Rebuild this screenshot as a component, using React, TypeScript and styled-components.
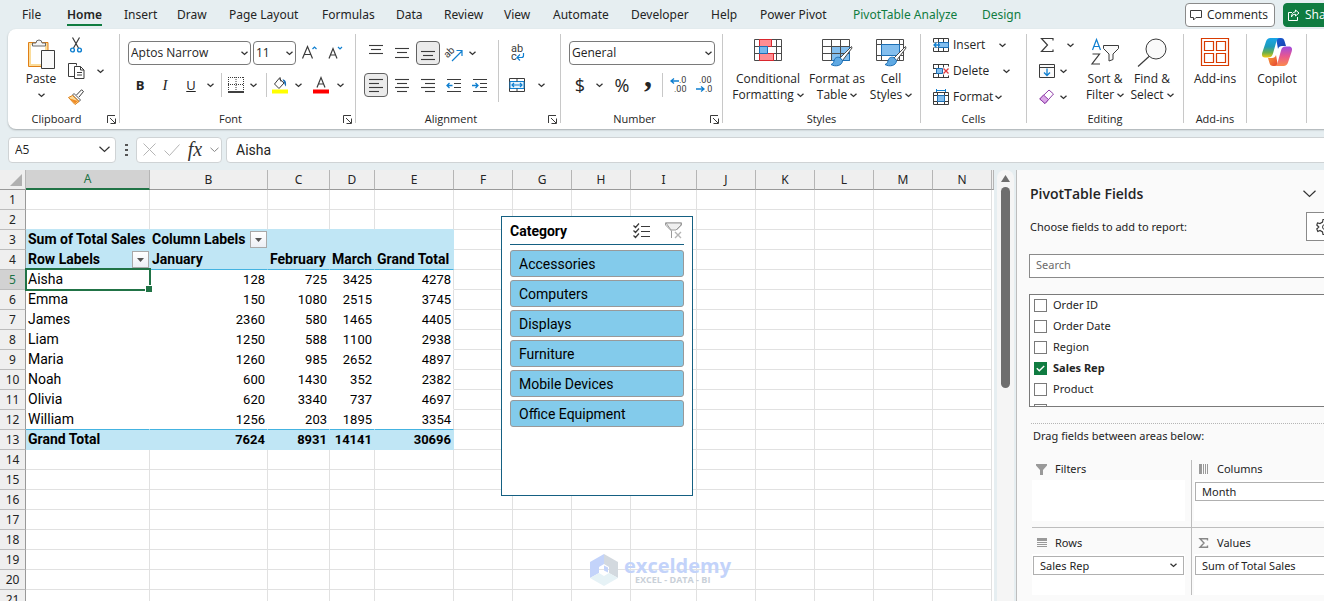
import React from "react";
import styled, { createGlobalStyle, css } from "styled-components";

const UI = `"Open Sans", "Noto Sans", sans-serif`;
const WIDE = `"Noto Sans", "Open Sans", sans-serif`;
const GRID = `Roboto, "Liberation Sans", sans-serif`;

const C = {
  chrome: "#e6eef1",
  ink: "#242424",
  green: "#107c41",
  select: "#217346",
  blue: "#0f7fd0",
  line: "#c8c8c8",
  gridline: "#e1e1e1",
  pivot: "#c0e6f5",
  pivotEdge: "#44b3e1",
  slicer: "#83cbeb",
  slicerEdge: "#156082",
};

const Global = createGlobalStyle`
  * { box-sizing: border-box; }
  html, body { margin: 0; height: 100%; overflow: hidden; background: ${C.chrome}; }
  body { font: 12px/16px ${UI}; color: ${C.ink}; }
  button, input, select { font: inherit; color: inherit; margin: 0; }
  button { background: none; border: 0; padding: 0; }
  svg { display: block; flex: none; overflow: visible; }
`;

/* The window runs a little past the right edge of the viewport. */
const Shell = styled.div`
  width: calc(100vw + 32px);
  height: 100vh;
  display: flex;
  flex-direction: column;
  background: ${C.chrome};
`;

/* ---------- Tab strip ---------- */
const TabStrip = styled.header`
  display: flex;
  align-items: center;
  height: 29px;
  padding-left: 22px;
`;
const Tabs = styled.nav`
  display: flex;
  flex: 1;
  height: 29px;
`;
const Tab = styled.a<{ $w: number; $active?: boolean; $context?: boolean }>`
  flex: 0 0 ${(p) => p.$w}px;
  font-family: ${WIDE};
  font-size: 12px;
  line-height: 30px;
  color: ${(p) => (p.$context ? C.green : C.ink)};
  font-weight: ${(p) => (p.$active ? 600 : 400)};
  text-decoration: none;
  white-space: nowrap;
  span {
    display: inline-block;
    height: 26px;
    border-bottom: ${(p) => (p.$active ? `2px solid ${C.green}` : "0")};
  }
`;
const ActionButton = styled.button<{ $primary?: boolean }>`
  display: flex;
  align-items: center;
  gap: 5px;
  height: 24px;
  width: ${(p) => (p.$primary ? 73 : 90)}px;
  padding: 0 4px;
  margin-right: ${(p) => (p.$primary ? 0 : 8)}px;
  border: 1px solid ${(p) => (p.$primary ? C.green : "#8a8a8a")};
  border-radius: 4px;
  background: ${(p) => (p.$primary ? C.green : "#fff")};
  color: ${(p) => (p.$primary ? "#fff" : C.ink)};
  white-space: nowrap;
`;

/* ---------- Ribbon ---------- */
const Ribbon = styled.section`
  display: flex;
  align-items: flex-start;
  height: 100px;
  margin-left: 8px;
  padding-top: 5px;
  background: #fff;
  border-radius: 8px;
  box-shadow: 0 1px 2px rgba(0, 0, 0, 0.28);
`;
const Group = styled.div<{ $w: number }>`
  flex: 0 0 ${(p) => p.$w}px;
  display: flex;
  flex-direction: column;
  height: 93px;
`;
const GroupBody = styled.div<{ $gap?: number; $pad?: number }>`
  flex: 1;
  display: flex;
  gap: ${(p) => p.$gap ?? 0}px;
  padding: 3px 0 0 ${(p) => p.$pad ?? 8}px;
`;
const GroupLabel = styled.div<{ $launch?: boolean }>`
  position: relative;
  height: 16px;
  padding-right: ${(p) => (p.$launch ? 14 : 0)}px;
  font-size: 11px;
  text-align: center;
`;
const Launcher = styled.button`
  position: absolute;
  right: 3px;
  top: 4px;
`;
const Divider = styled.i<{ $h?: number; $m?: number; $top?: number }>`
  flex: none;
  width: 1px;
  height: ${(p) => p.$h ?? 89}px;
  margin: ${(p) => p.$top ?? 0}px ${(p) => p.$m ?? 0}px 0;
  background: ${C.line};
`;
const Stack = styled.div<{ $gap?: number; $pad?: number }>`
  display: flex;
  flex-direction: column;
  gap: ${(p) => p.$gap ?? 8}px;
  padding-top: ${(p) => p.$pad ?? 4}px;
`;
const Line = styled.div<{ $gap?: number; $top?: boolean }>`
  display: flex;
  align-items: ${(p) => (p.$top ? "flex-start" : "center")};
  gap: ${(p) => p.$gap ?? 0}px;
`;
const Tool = styled.button<{ $w?: number; $h?: number; $on?: boolean }>`
  display: flex;
  flex: none;
  align-items: center;
  justify-content: center;
  width: ${(p) => p.$w ?? 24}px;
  height: ${(p) => p.$h ?? 24}px;
  ${(p) =>
    p.$on &&
    css`
      background: #ebebeb;
      border: 1px solid #616161;
      border-radius: 4px;
    `}
`;
const BigTool = styled.button<{ $w: number }>`
  display: flex;
  flex-direction: column;
  align-items: center;
  width: ${(p) => p.$w}px;
  white-space: nowrap;
`;
const BigIcon = styled.span`
  display: flex;
  align-items: flex-start;
  justify-content: center;
  height: 34px;
  padding-top: 1px;
`;
const Caption = styled.span`
  display: flex;
  align-items: center;
  gap: 3px;
  height: 16px;
`;
const RowTool = styled.button<{ $gap: number }>`
  display: flex;
  align-items: center;
  height: 16px;
  gap: 4px;
  svg:last-child {
    margin-left: ${(p) => p.$gap}px;
  }
`;
const Picker = styled.span<{ $w: number }>`
  position: relative;
  display: block;
  width: ${(p) => p.$w}px;
  select {
    appearance: none;
    display: block;
    width: 100%;
    height: 24px;
    padding: 0 2px;
    background: #fff;
    border: 1px solid #7a7a7a;
    border-radius: 4px;
  }
  svg {
    position: absolute;
    right: 3px;
    top: 10px;
    pointer-events: none;
  }
`;

/* ---------- Formula bar ---------- */
const FormulaBar = styled.div`
  display: flex;
  align-items: center;
  height: 41px;
  padding-left: 8px;
`;
const Field = styled.div<{ $w?: number }>`
  display: flex;
  align-items: center;
  ${(p) => (p.$w ? `width: ${p.$w}px;` : "flex: 1;")}
  height: 26px;
  background: #fff;
  border: 1px solid #cfd3d5;
  border-radius: 4px;
  input {
    flex: 1;
    min-width: 0;
    border: 0;
    padding: 0;
    background: none;
    outline: 0;
  }
`;
const NameBox = styled(Field)`
  padding: 0 5px 0 6px;
`;
const FormulaTools = styled(Field)`
  justify-content: space-between;
  padding: 0 2px 0 6px;
`;
const FormulaInput = styled(Field)`
  margin-left: 4px;
  padding-left: 9px;
  font: 14px/20px ${GRID};
`;
const Grip = styled.span`
  display: flex;
  justify-content: center;
  width: 20px;
`;

/* ---------- Workspace ---------- */
const Workspace = styled.main`
  flex: 1;
  min-height: 0;
  display: flex;
`;
const Sheet = styled.div`
  position: relative;
  flex: 1;
  min-width: 0;
  overflow: hidden;
  background: #fff;
`;
const Grid = styled.table`
  width: 100%;
  table-layout: fixed;
  border-collapse: separate;
  border-spacing: 0;
  font: 13px/19px ${GRID};
  color: #000;
  th, td {
    height: 20px;
    padding: 0;
    font-weight: 400;
    white-space: nowrap;
  }
`;
const ColHead = styled.th<{ $on?: boolean }>`
  background: ${(p) => (p.$on ? "#d2d2d2" : "#efefef")};
  color: ${(p) => (p.$on ? C.select : C.ink)};
  font-family: ${WIDE};
  font-size: 12px;
  line-height: 18px;
  border-right: 1px solid #b5b5b5;
  border-bottom: ${(p) => (p.$on ? `2px solid ${C.select}` : "1px solid #999")};
`;
const RowHead = styled.th<{ $on?: boolean }>`
  && { padding-top: 1px; }
  background: ${(p) => (p.$on ? "#d2d2d2" : "#efefef")};
  color: ${(p) => (p.$on ? C.select : C.ink)};
  font-family: ${WIDE};
  font-size: 12px;
  line-height: 18px;
  border-right: 1px solid #999;
  border-bottom: 1px solid #bcbcbc;
`;
const Corner = styled.th`
  background: #efefef;
  border-right: 1px solid #b5b5b5;
  border-bottom: 1px solid #999;
  svg { margin-left: 10px; }
`;
const Cell = styled.td<{ $fill?: string; $right?: string; $bottom?: string; $bold?: boolean; $num?: boolean }>`
  position: relative;
  background: ${(p) => p.$fill ?? "#fff"};
  border-right: 1px solid ${(p) => p.$right ?? C.gridline};
  border-bottom: 1px solid ${(p) => p.$bottom ?? C.gridline};
  font-size: ${(p) => (p.$num ? 13 : 14)}px;
  text-align: ${(p) => (p.$num ? "right" : "left")};
  && {
    font-weight: ${(p) => (p.$bold ? 700 : 400)};
    padding: 0 ${(p) => (p.$num ? 2 : 0)}px 0 ${(p) => (p.$num ? 0 : 2)}px;
  }
`;
const FilterButton = styled.button`
  position: absolute;
  right: 0;
  top: 1px;
  display: flex;
  align-items: center;
  justify-content: center;
  width: 17px;
  height: 17px;
  border: 1px solid #a9a9a9;
  background: linear-gradient(#fff, #eceff5);
`;
const Selection = styled.i`
  position: absolute;
  z-index: 1;
  inset: -2px -2px -2px -1px;
  border: 2px solid ${C.select};
  &::after {
    content: "";
    position: absolute;
    right: -3px;
    bottom: -3px;
    width: 6px;
    height: 6px;
    background: ${C.select};
    border: solid #fff;
    border-width: 1px 0 0 1px;
  }
`;

const Slicer = styled.section`
  position: absolute;
  left: 501px;
  top: 46px;
  width: 192px;
  height: 280px;
  padding: 0 8px;
  background: #fff;
  border: 1px solid ${C.slicerEdge};
  font: 14px/20px ${GRID};
  color: #000;
`;
const SlicerHead = styled.header`
  display: flex;
  align-items: center;
  gap: 15px;
  height: 28px;
  margin-bottom: 5px;
  padding-right: 2px;
  border-bottom: 1px solid ${C.slicerEdge};
  h2 { flex: 1; margin: 0; font: inherit; font-weight: 700; }
`;
const SlicerItem = styled.button`
  display: block;
  width: 100%;
  height: 27px;
  margin-bottom: 3px;
  padding: 1px 8px 0;
  text-align: left;
  background: ${C.slicer};
  border: 1px solid #999;
  border-radius: 3px;
`;

const Watermark = styled.div`
  position: absolute;
  left: 590px;
  top: 384px;
  display: flex;
  align-items: center;
  gap: 5px;
  color: #c3d3fa;
  font: 700 20px/20px ${UI};
  small {
    display: block;
    padding-left: 11px;
    font-size: 9px;
    line-height: 8px;
    color: #c9d0d8;
  }
`;

const Scroll = styled.div`
  flex: none;
  display: flex;
  flex-direction: column;
  align-items: center;
  gap: 5px;
  width: 17px;
  margin: 0 2px 0 3px;
  padding-top: 5px;
  background: #f5f5f5;
  border-radius: 8px 8px 0 0;
`;
const Thumb = styled.i`
  width: 9px;
  height: 201px;
  background: #6e6e6e;
  border-radius: 5px;
`;

/* ---------- PivotTable pane ---------- */
const Pane = styled.aside`
  flex: 0 0 340px;
  padding-left: 12px;
  background: #fafafa;
  border-left: 1px solid #bdbdbd;
  font-family: ${WIDE};
  font-size: 11px;
`;
const PaneHead = styled.div`
  display: flex;
  align-items: center;
  gap: 20px;
  height: 42px;
  padding: 6px 8px 0 1px;
  h1 { flex: 1; margin: 0; font: 600 14px/20px ${UI}; }
`;
const Choose = styled.div`
  display: flex;
  align-items: center;
  justify-content: space-between;
  padding: 0 12px 0 1px;
  button {
    display: flex;
    align-items: center;
    width: 38px;
    height: 29px;
    padding-left: 9px;
    background: #fff;
    border: 1px solid #8a8a8a;
  }
`;
const Search = styled.input`
  display: block;
  width: 316px;
  height: 24px;
  margin: 13px 0 16px;
  padding: 0 6px 3px;
  border: 1px solid #8a8a8a;
  background: #fff;
  &::placeholder { color: #6b6b6b; opacity: 1; }
`;
const FieldList = styled.div`
  width: 316px;
  height: 113px;
  padding: 0 4px;
  overflow: hidden;
  background: #fff;
  border: 1px solid #7a7a7a;
`;
const Check = styled.label<{ $on?: boolean }>`
  display: flex;
  align-items: center;
  gap: 6px;
  height: 21px;
  padding-bottom: 1px;
  font-weight: ${(p) => (p.$on ? 700 : 400)};
  input {
    appearance: none;
    width: 13px;
    height: 13px;
    border: 1px solid #7a7a7a;
    background: #fff;
  }
  input:checked {
    border-color: ${C.green};
    background: ${C.green};
  }
  span { position: relative; display: flex; }
  svg { position: absolute; left: 2px; top: 3px; }
`;
const DragHint = styled.p`
  margin: 16px 12px 0 2px;
  padding: 4px 0 0 2px;
  border-top: 1px dotted #b5b5b5;
`;
const Areas = styled.div`
  display: grid;
  grid-template-columns: 160px 1fr;
  margin: 16px 12px 0 3px;
`;
const Area = styled.section<{ $left?: boolean; $top?: boolean }>`
  height: ${(p) => (p.$top ? 68 : 67)}px;
  padding: 0 ${(p) => (p.$left ? 6 : 0)}px 0 ${(p) => (p.$left ? 0 : 2)}px;
  border-right: ${(p) => (p.$left ? "1px solid #bdbdbd" : "0")};
  border-bottom: ${(p) => (p.$top ? "1px solid #bdbdbd" : "0")};
  h3 {
    display: flex;
    align-items: center;
    gap: 8px;
    height: ${(p) => (p.$top ? 20 : 26)}px;
    margin: 0;
    padding: ${(p) => (p.$top ? "0 0 2px" : "3px 0 0")} 4px;
    font: inherit;
  }
`;
const Drop = styled.div`
  height: 41px;
  padding: 2px 1px;
  background: #fff;
`;
const Chip = styled.button`
  display: flex;
  align-items: center;
  justify-content: space-between;
  width: 100%;
  height: 19px;
  padding: 0 6px;
  background: #fff;
  border: 1px solid #b0b0b0;
`;

/* ---------- Icons ---------- */
const Chev = ({ w = 7, c = "#333", s = 1.3 }: { w?: number; c?: string; s?: number }) => (
  <svg width={w} height={Math.ceil(w / 2) + 1} viewBox={`0 0 ${w} ${Math.ceil(w / 2) + 1}`} fill="none" stroke={c} strokeWidth={s}>
    <path d={`M.5 .8 L${w / 2} ${w / 2} L${w - 0.5} .8`} />
  </svg>
);
const Svg = ({ w = 16, h = 16, children }: { w?: number; h?: number; children: React.ReactNode }) => (
  <svg width={w} height={h} viewBox={`0 0 ${w} ${h}`} fill="none" stroke="#3b3b3b" strokeWidth="1">
    {children}
  </svg>
);
const PasteIcon = () => (
  <Svg w={28} h={31}>
    <path d="M1.500 4.500h19.500v24H1.500z" fill="#fbdc9a" stroke="#e07f16" />
    <path d="M4 7h14v19H4z" fill="#fff" stroke="none" />
    <path d="M5.500 8V5h3.500a3 3 0 0 1 6 0h3.500v3z" fill="#f4f4f4" stroke="#6a6a6a" />
    <path d="M14.500 12.500h13v18h-13z" fill="#fafafa" stroke="#3b3b3b" />
  </Svg>
);
const CutIcon = () => (
  <Svg>
    <path d="M4.500 .5 10.500 11M11.500 .5 5.500 11" strokeWidth="1.200" />
    <circle cx="4.500" cy="13" r="1.900" stroke={C.blue} strokeWidth="1.400" />
    <circle cx="11.500" cy="13" r="1.900" stroke={C.blue} strokeWidth="1.400" />
  </Svg>
);
const CopyIcon = () => (
  <Svg w={17}>
    <path d="M6 13.500H.5V.5h8v2" />
    <path d="M6.500 3.500h6l3.500 3.500v8.500H6.500zM12.500 3.500V7H16M9 9.500h5M9 12h5" fill="#fff" />
  </Svg>
);
const BrushIcon = () => (
  <Svg>
    <path d="M8.500 6 13.500 .8l2 1.700-4.500 5.500" fill="#fff" />
    <path d="m6 4.500 6.500 6.500-1.500 1.500-6.500-6.500z" fill="#fff" stroke="#555" />
    <path d="M4.500 6.500 .5 8.500l6.500 7 4-3z" fill="#fbdc9a" stroke="#e07f16" />
    <path d="m2 9.500 5 5 3-2.500-3.500-1z" fill="#f08a24" stroke="none" />
  </Svg>
);
const BorderIcon = () => (
  <Svg>
    <path d="M.5 0v14M15.500 0v14M8 0v14M0 .5h16M0 7.500h16" strokeDasharray="1 1" />
    <path d="M0 15h16" stroke="#000" strokeWidth="1.500" />
  </Svg>
);
const FillIcon = () => (
  <Svg h={17}>
    <path d="m7 1.500 5 4.500-5 5.500-4.500-4.500z" />
    <path d="M7 1.500 8 .5l1 4" />
    <path d="M10.500 2.500c3 0 4 2 3.500 7-1.500-1-1.500-3-2-4z" fill="#1c6fb5" stroke="none" />
    <path d="M0 12.500h16v4H0z" fill="#ff0" stroke="none" />
  </Svg>
);
const FontColorIcon = () => (
  <Svg h={17}>
    <path d="m4 10.500 4-10 4 10M5.500 7h5" strokeWidth="1.200" />
    <path d="M0 12.500h16v4H0z" fill="red" stroke="none" />
  </Svg>
);
const SizeIcon = ({ down }: { down?: boolean }) => (
  <Svg w={17} h={16}>
    <path d={down ? "m1 13.500 4-10 4 10M2.500 10h5" : "m.5 13.500 5-12 5 12M2.500 9.500h6"} strokeWidth="1.200" />
    <path d={down ? "m10 2 2 2 2-2" : "m10.500 4 2-2 2 2"} stroke={C.blue} strokeWidth="1.200" />
  </Svg>
);
const LinesIcon = ({ rows }: { rows: [number, number, number][] }) => (
  <Svg>
    {rows.map(([x, y, w]) => (
      <path key={y} d={`M${x} ${y}.5h${w}`} strokeWidth="1.100" />
    ))}
  </Svg>
);
const IndentIcon = ({ right }: { right?: boolean }) => (
  <Svg>
    <path d="M1 2.500h14M8 6.500h7M8 10.500h7M1 14.500h14" />
    <path d={right ? "M0 8.500h5.500M3.500 6l2.500 2.500L3.500 11" : "M6.500 8.500H1M3.500 6 1 8.500 3.500 11"} stroke={C.blue} strokeWidth="1.300" />
  </Svg>
);
const TextGlyph = styled.text<{ $s?: number }>`
  font: ${(p) => p.$s ?? 9}px ${GRID};
  fill: #3b3b3b;
  stroke: none;
`;
const OrientIcon = () => (
  <Svg w={17} h={17}>
    <TextGlyph $s={10} transform="rotate(-45 5 10)" x="0" y="10">ab</TextGlyph>
    <path d="M6 16 15.500 6.500M10.500 5.500h5.500v5.500" stroke={C.blue} strokeWidth="1.200" />
  </Svg>
);
const WrapIcon = () => (
  <Svg w={15} h={18}>
    <TextGlyph $s={11} x="1" y="8">ab</TextGlyph>
    <TextGlyph $s={11} x="1" y="16">c</TextGlyph>
    <path d="M13.500 9v2.500a2 2 0 0 1-2 2H7.500M10 10.500l-3 3 3 3" stroke={C.blue} strokeWidth="1.200" />
  </Svg>
);
const MergeIcon = () => (
  <Svg>
    <path d="M.5 1.500h15v13H.5z" />
    <path d="M1 4.500h14v7H1z" fill="#e6f3fc" stroke={C.blue} />
    <path d="M8 1.500v3M8 11.500v3" />
    <path d="M3 8h10M5 6 3 8l2 2M11 6l2 2-2 2" stroke={C.blue} strokeWidth="1.200" />
  </Svg>
);
const DecimalIcon = ({ less }: { less?: boolean }) => (
  <Svg w={17} h={18}>
    <TextGlyph x={less ? 3 : 9} y="7">{less ? ".00" : ".0"}</TextGlyph>
    <TextGlyph x={less ? 9 : 4} y="16">{less ? ".0" : ".00"}</TextGlyph>
    <path d={less ? "M0 13h8M5 10.500 8 13l-3 2.500" : "M9 5H1M4 2.500 1 5l3 2.500"} stroke={C.blue} strokeWidth="1.300" />
  </Svg>
);
const CondIcon = () => (
  <Svg w={28} h={24}>
    <path d="M.5 1.500h27v21H.5zM.5 8.500h27M.5 15.500h27M22.500 1.500v21" stroke="#4a4a4a" />
    <path d="M5.500 1.500h12v7h-12zM5.500 15.500h14v7h-14z" fill="#ff8d92" stroke="#d9272e" />
    <path d="M5.500 8.500h8v7h-8z" fill="#78b8ec" stroke="#1c6fb5" />
  </Svg>
);
const Paintbrush = () => (
  <>
    <path d="M29.500 8.500 18 20l2.500 2.500L30 10z" fill="#fff" stroke="#4a4a4a" />
    <path d="M18 19.500c-4-1-5.500 1-6 3.500-.5 2-1.500 3-3 3.500 4 2.500 11.500 1.500 11.500-4z" fill="#5fa9e3" stroke="#1c6fb5" />
  </>
);
const TableIcon = () => (
  <Svg w={31} h={28}>
    <path d="M.5 1.500h27v21H.5z" stroke="#4a4a4a" />
    <path d="M9.500 8.500h18v14h-18z" fill="#83beee" stroke="#1c6fb5" />
    <path d="M.5 8.500h27M.5 15.500h27M9.500 1.500v21M18.500 1.500v21" stroke="#4a4a4a" />
    <Paintbrush />
  </Svg>
);
const CellStyleIcon = () => (
  <Svg w={31} h={28}>
    <path d="M.5 1.500h27v21H.5zM.5 6.500h27M.5 17.500h27M5.500 1.500v21M23.500 1.500v21" stroke="#4a4a4a" />
    <path d="M5.500 6.500h18v11h-18z" fill="#83beee" stroke="#1c6fb5" />
    <Paintbrush />
  </Svg>
);
const InsertIcon = () => (
  <Svg h={14}>
    <path d="M.5 .5h15v13H.5zM.5 4.500h15M.5 9.500h15M5.500 .5v13M10.500 .5v13" />
    <path d="M5.500 4.500h10v5h-10z" fill="#83beee" stroke="#1c6fb5" />
    <path d="M-1 4.500h6v5h-6z" fill="#fff" stroke="none" />
    <path d="M7 7H1M3.500 4.500 1 7l2.500 2.500" stroke={C.blue} strokeWidth="1.300" />
  </Svg>
);
const DeleteIcon = () => (
  <Svg h={14}>
    <path d="M0 .5h16M0 13.500h16M.5 .5v4M.5 9.500v4M5.500 .5v4M5.500 9.500v4M10.500 .5v3M10.500 10.500v3M15.500 .5v2M15.500 11.500v2M0 4.500h4M0 9.500h4" />
    <path d="M3.500 4.500h6v5h-6z" fill="#83beee" stroke="#1c6fb5" />
    <path d="m10.500 4.500 5 5M15.500 4.500l-5 5" stroke="#e0393e" strokeWidth="1.300" />
  </Svg>
);
const FormatIcon = () => (
  <Svg>
    <path d="M.5 3.500h15v12H.5zM.5 6.500h15M.5 12.500h15M4.500 3.500v12M11.500 3.500v12" />
    <path d="M4.500 6.500h7v6h-7z" fill="#83beee" stroke="#1c6fb5" />
    <path d="M4 1.500h8M3.500 0v3M12.500 0v3" stroke={C.blue} />
  </Svg>
);
const SumIcon = () => (
  <Svg w={14}>
    <path d="M13 3.500V1.500H1.500L7.500 8l-6 6.500H13v-2" strokeWidth="1.200" />
  </Svg>
);
const FillDownIcon = () => (
  <Svg h={14}>
    <path d="M.5 .5h15v13H.5zM.5 3.500h15" fill="#fafafa" />
    <path d="M8 4.500v7M5 8.500l3 3 3-3" stroke={C.blue} strokeWidth="1.300" />
  </Svg>
);
const EraserIcon = () => (
  <Svg>
    <path d="m10 1 4.500 4L6 14.500.800 10z" fill="#fff" stroke="#8f3fa8" />
    <path d="m4.500 6 5 4.500L6 14.500.800 10z" fill="#dba6e8" stroke="#8f3fa8" />
  </Svg>
);
const SortIcon = () => (
  <Svg w={29} h={28}>
    <path d="m1.500 12 4-10.500L9.500 12M2.800 8.500h5.500" stroke={C.blue} strokeWidth="1.200" />
    <path d="M1.500 16h7l-7.500 10h8" strokeWidth="1.200" />
    <path d="M12.500 7.500h15v3l-5.500 5.500v5.500l-4 1.500v-7l-5.500-5.500z" fill="#fafafa" />
  </Svg>
);
const FindIcon = () => (
  <Svg w={30} h={29}>
    <circle cx="19" cy="11" r="10" fill="#fafafa" />
    <path d="M12 18.500 1 28.500" strokeWidth="1.200" />
  </Svg>
);
const AddinsIcon = () => (
  <Svg w={28} h={28}>
    <path d="M.5 .5h27v27H.5zM3.500 3.500h9v9h-9zM15.500 3.500h9v9h-9zM3.500 15.500h9v9h-9zM15.500 15.500h9v9h-9z" stroke="#d83b01" strokeWidth="1.200" />
  </Svg>
);
const CopilotIcon = () => (
  <svg width="30" height="28" viewBox="0 0 30 28">
    <defs>
      <linearGradient id="cpA" x1="0" y1="0" x2="0" y2="1">
        <stop offset="0" stopColor="#18a5e8" />
        <stop offset=".45" stopColor="#1e9bb8" />
        <stop offset=".75" stopColor="#6bb04a" />
        <stop offset="1" stopColor="#f2c811" />
      </linearGradient>
      <linearGradient id="cpB" x1="0" y1="0" x2="0" y2="1">
        <stop offset="0" stopColor="#a04be0" />
        <stop offset=".5" stopColor="#e8588f" />
        <stop offset="1" stopColor="#fb8a4c" />
      </linearGradient>
      <linearGradient id="cpC" x1="0" y1="0" x2="1" y2="1">
        <stop offset="0" stopColor="#1a5fd8" />
        <stop offset="1" stopColor="#1540a8" />
      </linearGradient>
      <linearGradient id="cpD" x1="0" y1="0" x2="1" y2="1">
        <stop offset="0" stopColor="#f9a03a" />
        <stop offset="1" stopColor="#e5402f" />
      </linearGradient>
    </defs>
    <path d="M14 0h5c2 0 3 1 3.500 3l1.500 5h-4c-2 0-3.500 1-4 3z" fill="url(#cpC)" />
    <path d="M16 28h-5c-2 0-3-1-3.500-3L6 20h4c2 0 3.500-1 4-3z" fill="url(#cpD)" />
    <path d="M8.500 0H18c-2 0-3 1.500-3.500 3L11 15.500c-.7 2.500-2 4-4.500 4H3c-3 0-3.500-2.500-2.700-5L4 3.500C4.800 1.200 6 0 8.500 0z" fill="url(#cpA)" />
    <path d="M21.500 28H12c2 0 3-1.500 3.500-3L19 12.500c.7-2.500 2-4 4.500-4H27c3 0 3.500 2.500 2.700 5L26 24.500c-.8 2.300-2 3.500-4.500 3.500z" fill="url(#cpB)" />
  </svg>
);
const LaunchIcon = () => (
  <Svg w={9} h={9}>
    <path d="M.5 8V.5H8M3 3l5 5M8.500 3.500v5h-5" />
  </Svg>
);
const GlyphB = styled.span<{ $k?: "b" | "i" | "u" }>`
  font-size: ${(p) => (p.$k === "i" ? 15 : 13)}px;
  line-height: 16px;
  font-weight: ${(p) => (p.$k === "b" ? 700 : 400)};
  font-style: ${(p) => (p.$k === "i" ? "italic" : "normal")};
  font-family: ${(p) => (p.$k === "i" ? `"Liberation Serif", serif` : UI)};
  text-decoration: ${(p) => (p.$k === "u" ? "underline" : "none")};
`;
const GlyphNum = styled.span<{ $heavy?: boolean }>`
  font-family: ${(p) => (p.$heavy ? `"Liberation Serif", serif` : UI)};
  font-weight: ${(p) => (p.$heavy ? 700 : 400)};
  font-size: ${(p) => (p.$heavy ? 32 : 18)}px;
  line-height: ${(p) => (p.$heavy ? 8 : 20)}px;
  margin-bottom: ${(p) => (p.$heavy ? 18 : 0)}px;
`;
const Fx = styled.span`
  font: italic 20px/20px "Liberation Serif", serif;
  color: #333;
`;

/* ---------- Data ---------- */
const tabs: { t: string; w: number; active?: boolean; context?: boolean }[] = [
  { t: "File", w: 45 },
  { t: "Home", w: 57, active: true },
  { t: "Insert", w: 53 },
  { t: "Draw", w: 52 },
  { t: "Page Layout", w: 93 },
  { t: "Formulas", w: 74 },
  { t: "Data", w: 48 },
  { t: "Review", w: 60 },
  { t: "View", w: 49 },
  { t: "Automate", w: 78 },
  { t: "Developer", w: 80 },
  { t: "Help", w: 49 },
  { t: "Power Pivot", w: 93 },
  { t: "PivotTable Analyze", w: 129, context: true },
  { t: "Design", w: 50, context: true },
];

const columns: [string, number][] = [
  ["A", 124], ["B", 118], ["C", 62], ["D", 45], ["E", 79], ["F", 59], ["G", 59],
  ["H", 59], ["I", 66], ["J", 59], ["K", 59], ["L", 59], ["M", 59], ["N", 59],
];

const rows: Record<number, (string | number)[]> = {
  3: ["Sum of Total Sales", "Column Labels", "", "", ""],
  4: ["Row Labels", "January", "February", "March", "Grand Total"],
  5: ["Aisha", 128, 725, 3425, 4278],
  6: ["Emma", 150, 1080, 2515, 3745],
  7: ["James", 2360, 580, 1465, 4405],
  8: ["Liam", 1250, 588, 1100, 2938],
  9: ["Maria", 1260, 985, 2652, 4897],
  10: ["Noah", 600, 1430, 352, 2382],
  11: ["Olivia", 620, 3340, 737, 4697],
  12: ["William", 1256, 203, 1895, 3354],
  13: ["Grand Total", 7624, 8931, 14141, 30696],
};
const rowNumbers = Array.from({ length: 21 }, (_, i) => i + 1);
const categories = ["Accessories", "Computers", "Displays", "Furniture", "Mobile Devices", "Office Equipment"];
const fields = ["Order ID", "Order Date", "Region", "Sales Rep", "Product", "Category"];

function cellStyle(r: number, c: number) {
  if (c > 4) return {};
  if (r === 2) return { $bottom: C.pivot };
  if (r === 3 || r === 4 || r === 13)
    return { $fill: C.pivot, $right: C.pivot, $bottom: r === 4 ? C.pivotEdge : C.pivot, $bold: true };
  if (r >= 5 && r <= 12)
    return { $right: c === 4 ? C.gridline : "#fff", $bottom: r === 12 ? C.pivotEdge : "#fff" };
  return {};
}

const DropArrow = () => (
  <svg width="7" height="4" viewBox="0 0 7 4"><path d="M0 0h7L3.500 4z" fill="#555" /></svg>
);

function GroupBox({ label, w, launch, gap, pad, children }: { label: string; w: number; launch?: boolean; gap?: number; pad?: number; children: React.ReactNode }) {
  return (
    <Group $w={w}>
      <GroupBody $gap={gap} $pad={pad}>{children}</GroupBody>
      <GroupLabel $launch={launch}>
        {label}
        {launch && <Launcher aria-label={`${label} settings`}><LaunchIcon /></Launcher>}
      </GroupLabel>
    </Group>
  );
}

function RibbonBar() {
  return (
    <Ribbon>
      <GroupBox label="Clipboard" w={111} launch gap={2}>
        <BigTool $w={50}>
          <BigIcon><PasteIcon /></BigIcon>
          <Caption>Paste</Caption>
          <Caption><Chev /></Caption>
        </BigTool>
        <Stack $gap={10} $pad={0}>
          <Tool $w={16} $h={16} aria-label="Cut"><CutIcon /></Tool>
          <Line $gap={12}>
            <Tool $w={16} $h={16} aria-label="Copy"><CopyIcon /></Tool>
            <Tool $w={8} $h={16} aria-label="Copy options"><Chev /></Tool>
          </Line>
          <Tool $w={16} $h={16} aria-label="Format Painter"><BrushIcon /></Tool>
        </Stack>
      </GroupBox>
      <Divider />
      <GroupBox label="Font" w={235} launch>
        <Stack>
          <Line $gap={2}>
            <Picker $w={123}>
              <select aria-label="Font name"><option>Aptos Narrow</option></select><Chev />
            </Picker>
            <Picker $w={43}>
              <select aria-label="Font size"><option>11</option></select><Chev />
            </Picker>
            <Tool aria-label="Increase font size"><SizeIcon /></Tool>
            <Tool aria-label="Decrease font size"><SizeIcon down /></Tool>
          </Line>
          <Line>
            <Tool aria-label="Bold"><GlyphB $k="b">B</GlyphB></Tool>
            <Tool $w={26} aria-label="Italic"><GlyphB $k="i">I</GlyphB></Tool>
            <Tool $w={26} aria-label="Underline"><GlyphB $k="u">U</GlyphB></Tool>
            <Tool $w={12} aria-label="Underline options"><Chev /></Tool>
            <Divider $h={24} $m={5} />
            <Tool $w={18} aria-label="Borders"><BorderIcon /></Tool>
            <Tool $w={16} aria-label="Border options"><Chev /></Tool>
            <Divider $h={24} $m={5} />
            <Tool $w={16} aria-label="Fill colour"><FillIcon /></Tool>
            <Tool $w={20} aria-label="Fill options"><Chev /></Tool>
            <Tool $w={26} aria-label="Font colour"><FontColorIcon /></Tool>
            <Tool $w={12} aria-label="Font colour options"><Chev /></Tool>
          </Line>
        </Stack>
      </GroupBox>
      <Divider />
      <GroupBox label="Alignment" w={204} launch>
        <Stack>
          <Line $gap={2}>
            <Tool aria-label="Top align"><LinesIcon rows={[[1, 0, 14], [3, 4, 10], [1, 8, 14]]} /></Tool>
            <Tool aria-label="Middle align"><LinesIcon rows={[[1, 3, 14], [3, 7, 10], [1, 12, 14]]} /></Tool>
            <Tool $on aria-label="Bottom align"><LinesIcon rows={[[1, 6, 14], [3, 10, 10], [1, 14, 14]]} /></Tool>
            <Tool aria-label="Orientation"><OrientIcon /></Tool>
            <Tool $w={8} aria-label="Orientation options"><Chev /></Tool>
          </Line>
          <Line $gap={2}>
            <Tool $on aria-label="Align left"><LinesIcon rows={[[1, 2, 14], [1, 6, 10], [1, 10, 14], [1, 14, 10]]} /></Tool>
            <Tool aria-label="Centre"><LinesIcon rows={[[1, 2, 14], [3, 6, 10], [1, 10, 14], [3, 14, 10]]} /></Tool>
            <Tool aria-label="Align right"><LinesIcon rows={[[1, 2, 14], [5, 6, 10], [1, 10, 14], [5, 14, 10]]} /></Tool>
            <Tool aria-label="Decrease indent"><IndentIcon /></Tool>
            <Tool aria-label="Increase indent"><IndentIcon right /></Tool>
          </Line>
        </Stack>
        <Divider $h={62} $m={6} $top={3} />
        <Stack>
          <Tool aria-label="Wrap text"><WrapIcon /></Tool>
          <Line>
            <Tool aria-label="Merge and centre"><MergeIcon /></Tool>
            <Tool aria-label="Merge options"><Chev /></Tool>
          </Line>
        </Stack>
      </GroupBox>
      <Divider />
      <GroupBox label="Number" w={161} launch>
        <Stack>
          <Picker $w={146}>
            <select aria-label="Number format"><option>General</option></select><Chev />
          </Picker>
          <Line>
            <Tool $w={22} aria-label="Currency"><GlyphNum>$</GlyphNum></Tool>
            <Tool $w={16} aria-label="Currency options"><Chev /></Tool>
            <Tool $w={30} aria-label="Percent"><GlyphNum>%</GlyphNum></Tool>
            <Tool $w={22} aria-label="Comma style"><GlyphNum $heavy>,</GlyphNum></Tool>
            <Divider $h={24} $m={3} />
            <Tool aria-label="Increase decimal"><DecimalIcon /></Tool>
            <Tool $w={28} aria-label="Decrease decimal"><DecimalIcon less /></Tool>
          </Line>
        </Stack>
      </GroupBox>
      <Divider />
      <GroupBox label="Styles" w={197} gap={1}>
        <BigTool $w={74}>
          <BigIcon><CondIcon /></BigIcon>
          <Caption>Conditional</Caption>
          <Caption>Formatting <Chev /></Caption>
        </BigTool>
        <BigTool $w={62}>
          <BigIcon><TableIcon /></BigIcon>
          <Caption>Format as</Caption>
          <Caption>Table <Chev /></Caption>
        </BigTool>
        <BigTool $w={44}>
          <BigIcon><CellStyleIcon /></BigIcon>
          <Caption>Cell</Caption>
          <Caption>Styles <Chev /></Caption>
        </BigTool>
      </GroupBox>
      <Divider />
      <GroupBox label="Cells" w={105} pad={12}>
        <Stack $gap={10} $pad={0}>
          <RowTool $gap={10}><InsertIcon />Insert <Chev /></RowTool>
          <RowTool $gap={10}><DeleteIcon />Delete <Chev /></RowTool>
          <RowTool $gap={-2}><FormatIcon />Format <Chev /></RowTool>
        </Stack>
      </GroupBox>
      <Divider />
      <GroupBox label="Editing" w={156} gap={12}>
        <Stack $gap={10} $pad={0}>
          <Line $gap={7}>
            <Tool $h={16} aria-label="AutoSum"><SumIcon /></Tool>
            <Tool $w={8} $h={16} aria-label="AutoSum options"><Chev /></Tool>
          </Line>
          <Line>
            <Tool $h={16} aria-label="Fill"><FillDownIcon /></Tool>
            <Tool $w={8} $h={16} aria-label="Fill series options"><Chev /></Tool>
          </Line>
          <Line>
            <Tool $h={16} aria-label="Clear"><EraserIcon /></Tool>
            <Tool $w={8} $h={16} aria-label="Clear options"><Chev /></Tool>
          </Line>
        </Stack>
        <Line $gap={7} $top>
          <BigTool $w={38}>
            <BigIcon><SortIcon /></BigIcon>
            <Caption>Sort &amp;</Caption>
            <Caption>Filter <Chev /></Caption>
          </BigTool>
          <BigTool $w={42}>
            <BigIcon><FindIcon /></BigIcon>
            <Caption>Find &amp;</Caption>
            <Caption>Select <Chev /></Caption>
          </BigTool>
        </Line>
      </GroupBox>
      <Divider />
      <GroupBox label="Add-ins" w={62}>
        <BigTool $w={46}>
          <BigIcon><AddinsIcon /></BigIcon>
          <Caption>Add-ins</Caption>
        </BigTool>
      </GroupBox>
      <Divider />
      <GroupBox label="" w={59}>
        <BigTool $w={44}>
          <BigIcon><CopilotIcon /></BigIcon>
          <Caption>Copilot</Caption>
        </BigTool>
      </GroupBox>
      <Divider />
    </Ribbon>
  );
}

function SheetGrid() {
  return (
    <Grid>
      <colgroup>
        <col width={26} />
        {columns.map(([n, w]) => <col key={n} width={w} />)}
        <col />
      </colgroup>
      <thead>
        <tr>
          <Corner aria-label="Select all">
            <svg width="12" height="12" viewBox="0 0 12 12"><path d="M12 0v12H0z" fill="#b0b0b0" /></svg>
          </Corner>
          {columns.map(([n]) => <ColHead key={n} scope="col" $on={n === "A"}>{n}</ColHead>)}
          <ColHead as="td" />
        </tr>
      </thead>
      <tbody>
        {rowNumbers.map((r) => (
          <tr key={r}>
            <RowHead scope="row" $on={r === 5}>{r}</RowHead>
            {columns.map(([n], c) => {
              const v = rows[r]?.[c];
              return (
                <Cell key={n} {...cellStyle(r, c)} $num={typeof v === "number"}>
                  {v}
                  {r === 3 && c === 1 && <FilterButton aria-label="Filter columns"><DropArrow /></FilterButton>}
                  {r === 4 && c === 0 && <FilterButton aria-label="Filter rows"><DropArrow /></FilterButton>}
                  {r === 5 && c === 0 && <Selection />}
                </Cell>
              );
            })}
            <td />
          </tr>
        ))}
      </tbody>
    </Grid>
  );
}

function CategorySlicer() {
  return (
    <Slicer>
      <SlicerHead>
        <h2>Category</h2>
        <button aria-label="Multi-select">
          <Svg w={17}>
            <path d="M8 3.500h9M8 8.500h9M8 13.500h9M.5 2.500l2 2L6 .5M.5 7.500l2 2L6 5.500M.5 12.500l2 2L6 10.500" strokeWidth="1.200" />
          </Svg>
        </button>
        <button aria-label="Clear filter">
          <Svg w={17} h={17}>
            <path d="M.5 1v2l6 6v7M16.500 1v2l-5 5M0 1h17" stroke="#9a9a9a" />
            <path d="M1 1h15v2l-5 5H6z" fill="#f0f0f0" stroke="#9a9a9a" />
            <path d="m10 10 6 6M16 10l-6 6" stroke="#b5b5b5" strokeWidth="1.400" />
          </Svg>
        </button>
      </SlicerHead>
      {categories.map((c) => <SlicerItem key={c}>{c}</SlicerItem>)}
    </Slicer>
  );
}

function PivotPane() {
  return (
    <Pane>
      <PaneHead>
        <h1>PivotTable Fields</h1>
        <button aria-label="Pane options"><Chev w={13} s={1.2} /></button>
        <button aria-label="Close pane"><Svg w={12} h={12}><path d="m1 1 10 10M11 1 1 11" /></Svg></button>
      </PaneHead>
      <Choose>
        Choose fields to add to report:
        <button aria-label="Layout options">
          <Svg w={18} h={18}>
            <circle cx="9" cy="9" r="2.500" />
            <path d="m7 1.500-.5 2.500L4 5.500 1.500 5 .8 7l2 2-2 2 1 2.500L4 12.500 6.500 14l.5 2.500h4l.5-2.500 2.500-1.500 2.500 1 1-2.500-2-2 2-2-1-2.500-2.500 1L11.500 4 11 1.500z" strokeWidth="1.200" />
          </Svg>
        </button>
      </Choose>
      <Search aria-label="Search fields" placeholder="Search" />
      <FieldList>
        {fields.map((f) => (
          <Check key={f} $on={f === "Sales Rep"}>
            <span>
              <input type="checkbox" defaultChecked={f === "Sales Rep"} />
              {f === "Sales Rep" && (
                <svg width="9" height="7" viewBox="0 0 9 7"><path d="m.8 3.200 2.500 2.500L8.200 1" fill="none" stroke="#fff" strokeWidth="1.400" /></svg>
              )}
            </span>
            {f}
          </Check>
        ))}
      </FieldList>
      <DragHint>Drag fields between areas below:</DragHint>
      <Areas>
        <Area $left $top>
          <h3>
            <svg width="11" height="11" viewBox="0 0 11 11"><path d="M0 0h11v1.500L7 6v5H4V6L0 1.500z" fill="#999" /></svg>
            Filters
          </h3>
          <Drop />
        </Area>
        <Area $top>
          <h3>
            <svg width="11" height="10" viewBox="0 0 11 10"><path d="M1 0h3v10H1zM5 0h1v10H5zM7 0h1v10H7zM9 0h1v10H9z" fill="#999" /></svg>
            Columns
          </h3>
          <Drop><Chip>Month <Chev /></Chip></Drop>
        </Area>
        <Area $left>
          <h3>
            <svg width="11" height="10" viewBox="0 0 11 10"><path d="M1 0h10v3H1zM1 4h10v1H1zM1 6h10v1H1zM1 8h10v1H1z" fill="#999" /></svg>
            Rows
          </h3>
          <Drop><Chip>Sales Rep <Chev /></Chip></Drop>
        </Area>
        <Area>
          <h3>
            <svg width="11" height="10" viewBox="0 0 11 10"><path d="M9.500 2.500V.8H2L6 5 2 9.200h7.500V7.500" fill="none" stroke="#888" strokeWidth="1.400" /></svg>
            Values
          </h3>
          <Drop><Chip>Sum of Total Sales <Chev /></Chip></Drop>
        </Area>
      </Areas>
    </Pane>
  );
}

export default function App() {
  return (
    <>
      <Global />
      <Shell>
        <TabStrip>
          <Tabs>
            {tabs.map((t) => (
              <Tab key={t.t} href="#" $w={t.w} $active={t.active} $context={t.context}><span>{t.t}</span></Tab>
            ))}
          </Tabs>
          <ActionButton>
            <Svg w={12} h={12}><path d="M.5 1.500h11v7H6L3.500 11V8.500h-3z" /></Svg>
            Comments
          </ActionButton>
          <ActionButton $primary>
            <svg width="12" height="12" viewBox="0 0 12 12" fill="none" stroke="#fff">
              <path d="M4 3.500H.5v8h9V8M7.500 1l3.500 3-3.500 3V5.200C5 5.200 4 6.500 3.500 8c0-3 1.500-5 4-5.200z" />
            </svg>
            Share
          </ActionButton>
        </TabStrip>
        <RibbonBar />
        <FormulaBar>
          <NameBox $w={108}>
            <input aria-label="Name box" defaultValue="A5" />
            <Chev w={11} s={1.2} />
          </NameBox>
          <Grip>
            <svg width="3" height="12" viewBox="0 0 3 12"><path d="M0 0h3v2H0zM0 5h3v2H0zM0 10h3v2H0z" fill="#555" /></svg>
          </Grip>
          <FormulaTools $w={86}>
            <button aria-label="Cancel"><svg width="13" height="13" viewBox="0 0 13 13" stroke="#b5b5b5"><path d="m.5 .5 12 12M12.500 .5l-12 12" /></svg></button>
            <button aria-label="Enter"><svg width="16" height="12" viewBox="0 0 16 12" fill="none" stroke="#b5b5b5"><path d="m.5 6.500 5 5L15.500 .5" /></svg></button>
            <button aria-label="Insert function"><Fx>fx</Fx></button>
            <Chev w={9} c="#888" s={1} />
          </FormulaTools>
          <FormulaInput><input aria-label="Formula" defaultValue="Aisha" /></FormulaInput>
        </FormulaBar>
        <Workspace>
          <Sheet>
            <SheetGrid />
            <Watermark>
              <svg width="29" height="32" viewBox="0 0 29 32">
                <path d="M14 0v10l-5 3v6l-9 5V8z" fill="#c3d3fa" />
                <path d="M14 0l14 8v16l-9-5v-6l-5-3z" fill="#d3d9df" />
                <path d="M0 24l9-5 5 3 5-3 9 5-14 8z" fill="#e6f2f6" />
                <path d="M14 11.500l4 2v5l-4-2z" fill="#c3d3fa" />
              </svg>
              <span>exceldemy<small>EXCEL - DATA - BI</small></span>
            </Watermark>
            <CategorySlicer />
          </Sheet>
          <Scroll>
            <svg width="9" height="7" viewBox="0 0 9 7"><path d="M4.500 0 9 7H0z" fill="#6e6e6e" /></svg>
            <Thumb />
          </Scroll>
          <PivotPane />
        </Workspace>
      </Shell>
    </>
  );
}
